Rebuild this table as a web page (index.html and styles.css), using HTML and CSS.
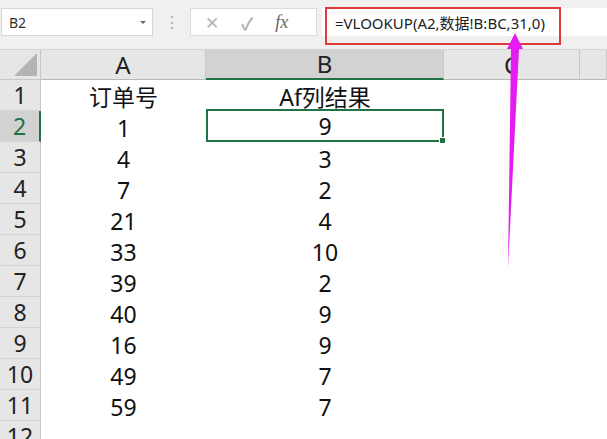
FILE: index.html
```html
<!DOCTYPE html>
<html lang="zh-CN">
<head>
  <meta charset="UTF-8" />
  <title>VLOOKUP</title>
  <link rel="stylesheet" href="styles.css">
</head>
<body>
  <div class="barra">
    <div class="nome">
      <span>B2</span>
      <span class="seta"></span>
    </div>
    <div class="pontos">⋮</div>
    <div class="botoes">
      <span class="x">✕</span>
      <span class="ok">✓</span>
      <span class="fx">fx</span>
    </div>
    <div class="formula">
      <div class="caixa">=VLOOKUP(A2,数据!B:BC,31,0)</div>
    </div>
  </div>

  <div class="planilha">
    <div class="canto"><div class="tri"></div></div>
    <div class="col">A</div>
    <div class="col sel">B</div>
    <div class="col">C</div>
    <div class="col"></div>

    <div class="lin">1</div><div class="cel">订单号</div><div class="cel">Af列结果</div><div class="cel"></div><div class="cel"></div>
    <div class="lin sel">2</div><div class="cel">1</div><div class="cel ativa">9<i class="alca"></i></div><div class="cel"></div><div class="cel"></div>
    <div class="lin">3</div><div class="cel">4</div><div class="cel">3</div><div class="cel"></div><div class="cel"></div>
    <div class="lin">4</div><div class="cel">7</div><div class="cel">2</div><div class="cel"></div><div class="cel"></div>
    <div class="lin">5</div><div class="cel">21</div><div class="cel">4</div><div class="cel"></div><div class="cel"></div>
    <div class="lin">6</div><div class="cel">33</div><div class="cel">10</div><div class="cel"></div><div class="cel"></div>
    <div class="lin">7</div><div class="cel">39</div><div class="cel">2</div><div class="cel"></div><div class="cel"></div>
    <div class="lin">8</div><div class="cel">40</div><div class="cel">9</div><div class="cel"></div><div class="cel"></div>
    <div class="lin">9</div><div class="cel">16</div><div class="cel">9</div><div class="cel"></div><div class="cel"></div>
    <div class="lin">10</div><div class="cel">49</div><div class="cel">7</div><div class="cel"></div><div class="cel"></div>
    <div class="lin">11</div><div class="cel">59</div><div class="cel">7</div><div class="cel"></div><div class="cel"></div>
    <div class="lin">12</div><div class="cel"></div><div class="cel"></div><div class="cel"></div><div class="cel"></div>
  </div>

  <svg class="flecha" width="40" height="250" viewBox="0 0 40 250">
    <polygon points="22,1 30,17 26,17 15,236 18,17 14,17" fill="#e51cf2"/>
  </svg>
</body>
</html>
```

FILE: styles.css
```css
body {
  margin: 0;
  font-family: "Noto Sans", "Noto Sans CJK SC", sans-serif;
  background: #fff;
  width: 607px;
  height: 439px;
  overflow: hidden;
  position: relative;
}

.barra {
  display: flex;
  align-items: flex-start;
  height: 50px;
  background: #f0f0f0;
  border-bottom: 1px solid #d4d4d4;
  padding-top: 8px;
  box-sizing: border-box;
}

.nome {
  width: 152px;
  height: 28px;
  margin-left: 1px;
  background: #fff;
  border: 1px solid #d6d6d6;
  box-sizing: border-box;
  display: flex;
  align-items: center;
  justify-content: space-between;
  padding: 0 6px 0 7px;
  font-size: 14px;
  color: #333;
}

.seta {
  width: 0;
  height: 0;
  border-left: 3px solid transparent;
  border-right: 3px solid transparent;
  border-top: 3px solid #666;
}

.pontos {
  width: 37px;
  text-align: center;
  color: #aaa;
  font-size: 16px;
  line-height: 28px;
}

.botoes {
  width: 127px;
  height: 28px;
  background: #fff;
  border: 1px solid #dcdcdc;
  box-sizing: border-box;
  display: flex;
  align-items: center;
  color: #b4b4b4;
  font-size: 17px;
}

.botoes .x { margin-left: 14px; }
.botoes .ok { margin-left: 22px; font-weight: bold; }
.botoes .fx {
  margin-left: 22px;
  font-family: "Liberation Serif", serif;
  font-style: italic;
  color: #666;
  font-size: 18px;
}

.formula {
  flex: 1;
  height: 28px;
  margin-left: 5px;
  background: #fff;
  position: relative;
}

.caixa {
  position: absolute;
  left: 3px;
  top: -1px;
  width: 236px;
  height: 38px;
  border: 2px solid #e23a3a;
  box-sizing: border-box;
  padding: 3px 0 0 8px;
  font-size: 15px;
  color: #222;
  white-space: nowrap;
}

.planilha {
  display: grid;
  grid-template-columns: 41px 165px 238px 136px 1fr;
  grid-template-rows: 30px repeat(12, 31px);
}

.canto {
  background: #e6e6e6;
  border-right: 1px solid #c8c8c8;
  border-bottom: 1px solid #c8c8c8;
  position: relative;
}

.tri {
  position: absolute;
  right: 3px;
  bottom: 3px;
  width: 0;
  height: 0;
  border-left: 23px solid transparent;
  border-bottom: 23px solid #b4b4b4;
}

.col {
  background: #e6e6e6;
  border-right: 1px solid #c8c8c8;
  border-bottom: 1px solid #b8b8b8;
  display: flex;
  justify-content: center;
  align-items: flex-end;
  font-size: 24px;
  line-height: 28px;
  color: #222;
}

.col.sel {
  background: #d2d2d2;
  border-bottom: 2px solid #217346;
}

.lin {
  background: #e6e6e6;
  border-right: 1px solid #c8c8c8;
  border-bottom: 1px solid #d4d4d4;
  display: flex;
  justify-content: center;
  align-items: flex-end;
  font-size: 23px;
  line-height: 29px;
  color: #222;
}

.lin.sel {
  background: #d2d2d2;
  color: #217346;
  border-right: 2px solid #217346;
}

.cel {
  display: flex;
  justify-content: center;
  align-items: flex-end;
  font-size: 23px;
  line-height: 28px;
  color: #111;
  position: relative;
}

.cel.ativa {
  border: 2px solid #217346;
  margin-top: -2px;
}

.alca {
  position: absolute;
  right: -4px;
  bottom: -4px;
  width: 5px;
  height: 5px;
  background: #217346;
  border: 1px solid #fff;
}

.flecha {
  position: absolute;
  left: 493px;
  top: 32px;
}
```
